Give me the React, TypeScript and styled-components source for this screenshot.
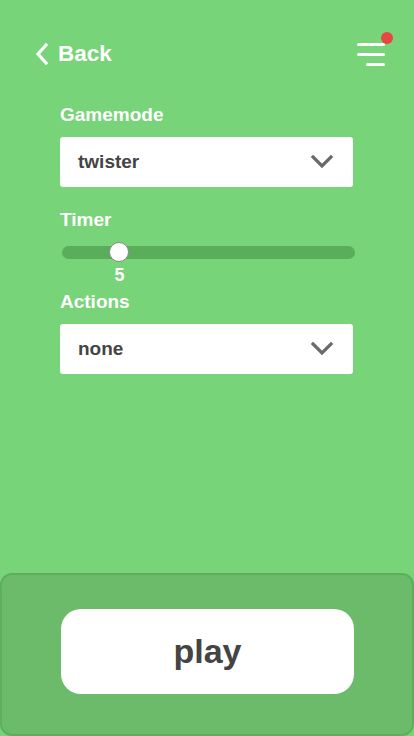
import React from "react"
import styled, { createGlobalStyle } from "styled-components"

const GlobalStyle = createGlobalStyle`
html, body {
  margin: 0;
  padding: 0;
  background: #78d478;
  font-family: "Liberation Sans", Arial, sans-serif;
}
#root {
  min-height: 100vh;
  display: flex;
  flex-direction: column;
}
`

const Screen = styled.div`
flex: 1;
display: flex;
flex-direction: column;
min-height: 736px;
`
const Header = styled.div`
display: flex;
align-items: center;
justify-content: space-between;
padding: 41px 29px 0 35px;
height: 26px;
`
const BackButton = styled.button`
display: flex;
align-items: center;
gap: 10px;
background: none;
border: none;
padding: 0;
color: #fff;
font-family: inherit;
font-size: 22.5px;
font-weight: bold;
cursor: pointer;
`
const MenuButton = styled.button`
position: relative;
width: 32px;
height: 26px;
background: none;
border: none;
padding: 0;
display: flex;
flex-direction: column;
align-items: flex-end;
justify-content: center;
gap: 7px;
cursor: pointer;
`
const MenuLine = styled.span<{ $w: number }>`
display: block;
width: ${p => p.$w}px;
height: 3px;
border-radius: 2px;
background: #fff;
`
const Dot = styled.span`
position: absolute;
top: -9px;
right: -8px;
width: 12px;
height: 12px;
border-radius: 50%;
background: #e84545;
`
const Form = styled.div`
padding: 0 61px 0 60px;
margin-top: 37px;
display: flex;
flex-direction: column;
`
const Label = styled.div<{ $top?: number }>`
color: #fff;
font-size: 19px;
font-weight: bold;
line-height: 22px;
margin-top: ${p => p.$top ?? 0}px;
`
const Select = styled.div`
margin-top: 11px;
height: 50px;
background: #fff;
border-radius: 3px;
display: flex;
align-items: center;
justify-content: space-between;
padding: 0 19px 0 18px;
color: #444;
font-size: 19px;
font-weight: bold;
`
const SliderWrap = styled.div`
position: relative;
margin-top: 15px;
`
const Track = styled.div`
height: 13px;
border-radius: 7px;
background: #5aad5a;
margin: 0 -2px 0 2px;
`
const Thumb = styled.div`
position: absolute;
top: -4px;
width: 20px;
height: 20px;
margin-left: -10px;
border-radius: 50%;
background: #fff;
border: 1px solid #8a8a8a;
box-sizing: border-box;
`
const SliderValue = styled.div`
position: absolute;
top: 19px;
width: 40px;
margin-left: -20px;
text-align: center;
color: #fff;
font-size: 18px;
font-weight: bold;
line-height: 20px;
`
const Bottom = styled.div`
margin-top: auto;
height: 163px;
box-sizing: border-box;
background: #6bbb6b;
border: 2px solid #5daf5d;
border-radius: 12px;
display: flex;
justify-content: center;
padding-top: 34px;
`
const PlayButton = styled.button`
width: 293px;
height: 85px;
margin-left: 1px;
background: #fff;
border: none;
border-radius: 20px;
color: #444;
font-family: inherit;
font-size: 34px;
font-weight: bold;
cursor: pointer;
`

const Chevron = ({ color, d, w, h }: { color: string; d: string; w: number; h: number }) => (
  <svg width={w} height={h} viewBox={`0 0 ${w} ${h}`} fill="none">
    <path d={d} stroke={color} strokeWidth={3.2} strokeLinecap="square" strokeLinejoin="miter" />
  </svg>
)

const Dropdown: React.FC<{ value: string }> = ({ value }) => (
  <Select>
    <span>{value}</span>
    <Chevron color="#6a6a6a" w={24} h={16} d="M3 3 L12 12 L21 3" />
  </Select>
)

const App = () => {
  const [timer] = React.useState(5)
  const min = 1
  const max = 24
  const pct = (timer - min) / (max - min)
  const left = `calc(12px + (100% - 20px) * ${pct})`

  return (
    <>
      <GlobalStyle />
      <Screen>
        <Header>
          <BackButton>
            <Chevron color="#fff" w={13} h={22} d="M11 2 L3 11 L11 20" />
            Back
          </BackButton>
          <MenuButton>
            <MenuLine $w={28} />
            <MenuLine $w={28} />
            <MenuLine $w={19} />
            <Dot />
          </MenuButton>
        </Header>
        <Form>
          <Label>Gamemode</Label>
          <Dropdown value="twister" />
          <Label $top={22}>Timer</Label>
          <SliderWrap>
            <Track />
            <Thumb style={{ left }} />
            <SliderValue style={{ left }}>{timer}</SliderValue>
          </SliderWrap>
          <Label $top={32}>Actions</Label>
          <Dropdown value="none" />
        </Form>
        <Bottom>
          <PlayButton>play</PlayButton>
        </Bottom>
      </Screen>
    </>
  )
}

export default App
